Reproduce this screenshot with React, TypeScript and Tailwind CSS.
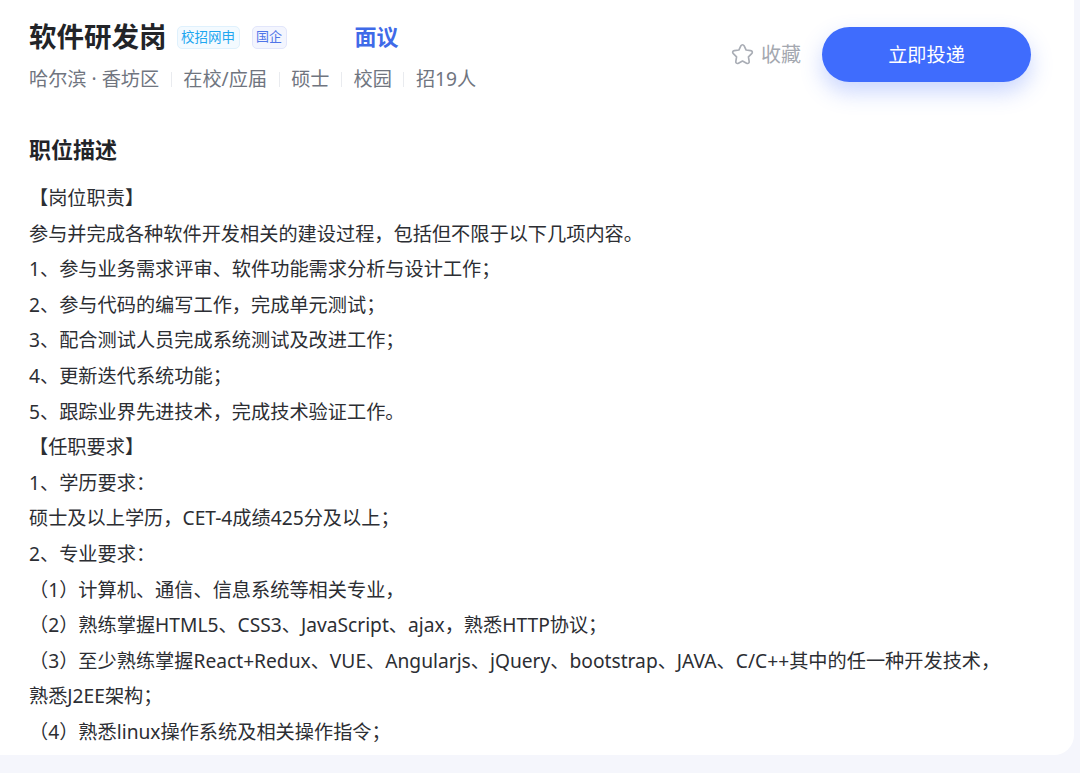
const font = '[font-family:"Noto_Sans","Noto_Sans_CJK_SC",sans-serif]';

const metas = ['在校/应届', '硕士', '校园', '招19人'];

const lines = [
  '【岗位职责】',
  '参与并完成各种软件开发相关的建设过程，包括但不限于以下几项内容。',
  '1、参与业务需求评审、软件功能需求分析与设计工作；',
  '2、参与代码的编写工作，完成单元测试；',
  '3、配合测试人员完成系统测试及改进工作；',
  '4、更新迭代系统功能；',
  '5、跟踪业界先进技术，完成技术验证工作。',
  '【任职要求】',
  '1、学历要求：',
  '硕士及以上学历，CET-4成绩425分及以上；',
  '2、专业要求：',
  '（1）计算机、通信、信息系统等相关专业，',
  '（2）熟练掌握HTML5、CSS3、JavaScript、ajax，熟悉HTTP协议；',
  '（3）至少熟练掌握React+Redux、VUE、Angularjs、jQuery、bootstrap、JAVA、C/C++其中的任一种开发技术，熟悉J2EE架构；',
  '（4）熟悉linux操作系统及相关操作指令；',
];

export default function App() {
  return (
    <div className={`${font} h-[773px] overflow-hidden bg-[#f5f6fc] pr-[6px]`}>
      <div className="h-[755px] overflow-hidden rounded-br-[20px] bg-white pl-[29px] pr-[43px] pt-[18px]">
        <div className="flex items-start justify-between">
          <div>
            <div className="flex h-[38px] items-center">
              <h1 className="text-[27.5px] font-bold leading-[38px] text-[#222428]">软件研发岗</h1>
              <span className="ml-[10px] flex h-[23px] items-center rounded-[5px] border border-[#dff1fd] bg-[#f3faff] px-[3.5px] text-[13.5px] text-[#1ea7f0]">校招网申</span>
              <span className="ml-[12px] flex h-[23px] items-center rounded-[5px] border border-[#e2e6fb] bg-[#f3f5fe] px-[3.5px] text-[13px] text-[#4f74e8]">国企</span>
              <span className="ml-[68px] -translate-y-[1px] text-[22px] font-bold leading-[38px] text-[#3f6ae8]">面议</span>
            </div>
            <div className="mt-[8px] flex items-center text-[19.2px] leading-[30px] text-[#70757f]">
              <span>哈尔滨 · 香坊区</span>
              {metas.map((m) => (
                <span key={m} className="flex items-center">
                  <span className="mx-[11.5px] h-[15px] w-px bg-[#e9ebef]" />
                  <span>{m}</span>
                </span>
              ))}
            </div>
          </div>
          <div className="mt-[9px] flex items-center">
            <svg width="25" height="25" viewBox="0 0 24 24" fill="none" stroke="#a9adb5" strokeWidth="1.6" strokeLinejoin="round">
              <path d="M12 2.6c.7 0 1.2.4 1.6 1.2l1.9 3.9 4.3.6c1.7.3 2.2 1.7 1 2.9l-3.1 3 .7 4.300c.3 1.700-1 2.600-2.500 1.800L12 18.300l-3.900 2c-1.500.8-2.800-.1-2.500-1.800l.7-4.300-3.100-3c-1.200-1.200-.7-2.600 1-2.900l4.300-.6 1.900-3.900c.4-.8.9-1.200 1.600-1.200z" />
            </svg>
            <span className="ml-[6px] text-[20px] text-[#a4a8b0]">收藏</span>
            <button className="ml-[21px] h-[55px] w-[209px] rounded-full bg-[#3f6cfd] pt-[1px] text-[19.2px] text-white shadow-[0_10px_22px_rgba(63,108,253,0.28)]">立即投递</button>
          </div>
        </div>

        <h2 className="mt-[39px] text-[22px] font-bold leading-[32px] text-[#222428]">职位描述</h2>
        <div className="mt-[15px] max-w-[985px] text-[19.2px] leading-[35.6px] text-[#2c2e33]">
          {lines.map((l) => (
            <p key={l}>{l}</p>
          ))}
        </div>
      </div>
    </div>
  );
}
